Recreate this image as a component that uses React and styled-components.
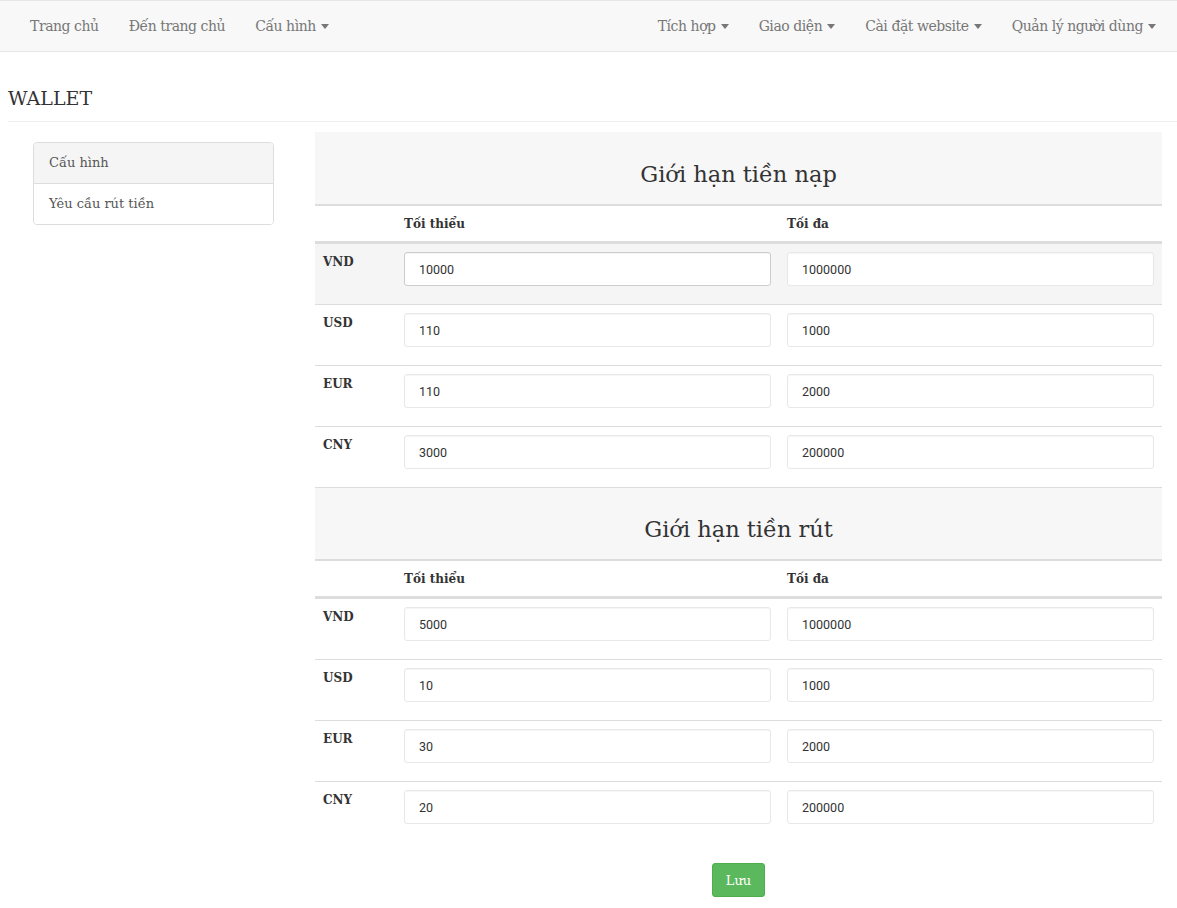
import React from "react";
import styled, { createGlobalStyle } from "styled-components";

const slab = `"Roboto Slab", "DejaVu Serif", serif`;

const GlobalStyles = createGlobalStyle`
  body {
    margin: 0;
    padding: 0;
    background: #fff;
    font-family: ${slab};
    font-size: 13px;
    color: #333;
  }
  * { box-sizing: border-box; }
`;

const Navbar = styled.nav`
  display: flex;
  justify-content: space-between;
  align-items: center;
  height: 52px;
  padding: 0 6px 0 15px;
  background: #f8f8f8;
  border-top: 1px solid #e7e7e7;
  border-bottom: 1px solid #e7e7e7;
`;

const NavGroup = styled.ul`
  display: flex;
  list-style: none;
  margin: 0;
  padding: 0;
`;

const NavLink = styled.li`
  display: flex;
  align-items: center;
  padding: 15px;
  line-height: 20px;
  color: #777;
  font-size: 14px;
  letter-spacing: -0.45px;
  white-space: nowrap;
`;

const Caret = styled.span`
  display: inline-block;
  width: 0;
  height: 0;
  margin-left: 5px;
  border-top: 5px solid #777;
  border-left: 4px solid transparent;
  border-right: 4px solid transparent;
`;

const PageHeader = styled.h1`
  margin: 35px 0 0 8px;
  padding-bottom: 12px;
  font-size: 19px;
  font-weight: 400;
  line-height: 22px;
  color: #333;
  border-bottom: 1px solid #eee;
`;

const Content = styled.div`
  display: grid;
  grid-template-columns: 241px 1fr;
  column-gap: 41px;
  padding: 10px 15px 0 33px;
  align-items: start;
`;

const ListGroup = styled.div`
  margin-top: 10px;
  border: 1px solid #ddd;
  border-radius: 4px;
  overflow: hidden;
`;

const ListItem = styled.div`
  padding: 10px 15px;
  line-height: 20px;
  font-size: 13px;
  color: #555;
  background: ${(p) => (p.active ? "#f5f5f5" : "#fff")};
  & + & {
    border-top: 1px solid #ddd;
  }
`;

const Main = styled.div`
  display: flex;
  flex-direction: column;
`;

const SectionTitle = styled.h3`
  margin: 0;
  height: 74px;
  display: flex;
  align-items: center;
  justify-content: center;
  padding-top: 10px;
  background: #f7f7f7;
  font-size: 22.5px;
  font-weight: 400;
  color: #333;
  border-top: 1px solid ${(p) => (p.first ? "#f7f7f7" : "#ddd")};
  border-bottom: 2px solid #ddd;
`;

const Row = styled.div`
  display: grid;
  grid-template-columns: 81px 1fr 1fr;
  background: ${(p) => (p.hover ? "#f5f5f5" : "#fff")};
  border-bottom: ${(p) => (p.head ? "2px solid #ddd" : "none")};
  & + & {
    border-top: ${(p) => (p.head ? "none" : "1px solid #ddd")};
  }
`;

const HeadCell = styled.div`
  padding: 8px;
  height: 35px;
  line-height: 20px;
  font-weight: 700;
  font-size: 12px;
`;

const Cell = styled.div`
  padding: 8px;
  line-height: 20px;
  font-weight: ${(p) => (p.bold ? 700 : 400)};
  font-size: 12px;
`;

const Input = styled.input`
  display: block;
  width: 100%;
  height: 34px;
  margin: 0 0 10px;
  padding: 6px 14px;
  font-family: Roboto, "Open Sans", sans-serif;
  font-size: 12.5px;
  color: #333;
  background: #fff;
  border: 1px solid ${(p) => (p.focused ? "#ccc" : "#e8e8e8")};
  border-radius: 3px;
  box-shadow: inset 0 1px 1px rgba(0, 0, 0, 0.04);
  outline: none;
`;

const Footer = styled.div`
  display: flex;
  justify-content: center;
  padding: 20px 0 30px;
  border-top: 1px solid transparent;
`;

const SaveButton = styled.button`
  height: 34px;
  padding: 0 13px;
  font-family: ${slab};
  font-size: 13px;
  color: #fff;
  background: #5cb85c;
  border: 1px solid #4cae4c;
  border-radius: 3px;
`;

const deposit = [
  ["VND", "10000", "1000000"],
  ["USD", "110", "1000"],
  ["EUR", "110", "2000"],
  ["CNY", "3000", "200000"],
];

const withdraw = [
  ["VND", "5000", "1000000"],
  ["USD", "10", "1000"],
  ["EUR", "30", "2000"],
  ["CNY", "20", "200000"],
];

const LimitTable = ({ title, rows, first }) => (
  <>
    <SectionTitle first={first}>{title}</SectionTitle>
    <Row head>
      <HeadCell />
      <HeadCell>Tối thiểu</HeadCell>
      <HeadCell>Tối đa</HeadCell>
    </Row>
    {rows.map(([cur, min, max], i) => (
      <Row key={cur} hover={first && i === 0}>
        <Cell bold>{cur}</Cell>
        <Cell>
          <Input defaultValue={min} focused={first && i === 0} />
        </Cell>
        <Cell>
          <Input defaultValue={max} />
        </Cell>
      </Row>
    ))}
  </>
);

function App() {
  return (
    <>
      <GlobalStyles />
      <Navbar>
        <NavGroup>
          <NavLink>Trang chủ</NavLink>
          <NavLink>Đến trang chủ</NavLink>
          <NavLink>
            Cấu hình <Caret />
          </NavLink>
        </NavGroup>
        <NavGroup>
          <NavLink>
            Tích hợp <Caret />
          </NavLink>
          <NavLink>
            Giao diện <Caret />
          </NavLink>
          <NavLink>
            Cài đặt website <Caret />
          </NavLink>
          <NavLink>
            Quản lý người dùng <Caret />
          </NavLink>
        </NavGroup>
      </Navbar>
      <PageHeader>WALLET</PageHeader>
      <Content>
        <ListGroup>
          <ListItem active>Cấu hình</ListItem>
          <ListItem>Yêu cầu rút tiền</ListItem>
        </ListGroup>
        <Main>
          <LimitTable title="Giới hạn tiền nạp" rows={deposit} first />
          <LimitTable title="Giới hạn tiền rút" rows={withdraw} />
          <Footer>
            <SaveButton>Lưu</SaveButton>
          </Footer>
        </Main>
      </Content>
    </>
  );
}

export default App;
